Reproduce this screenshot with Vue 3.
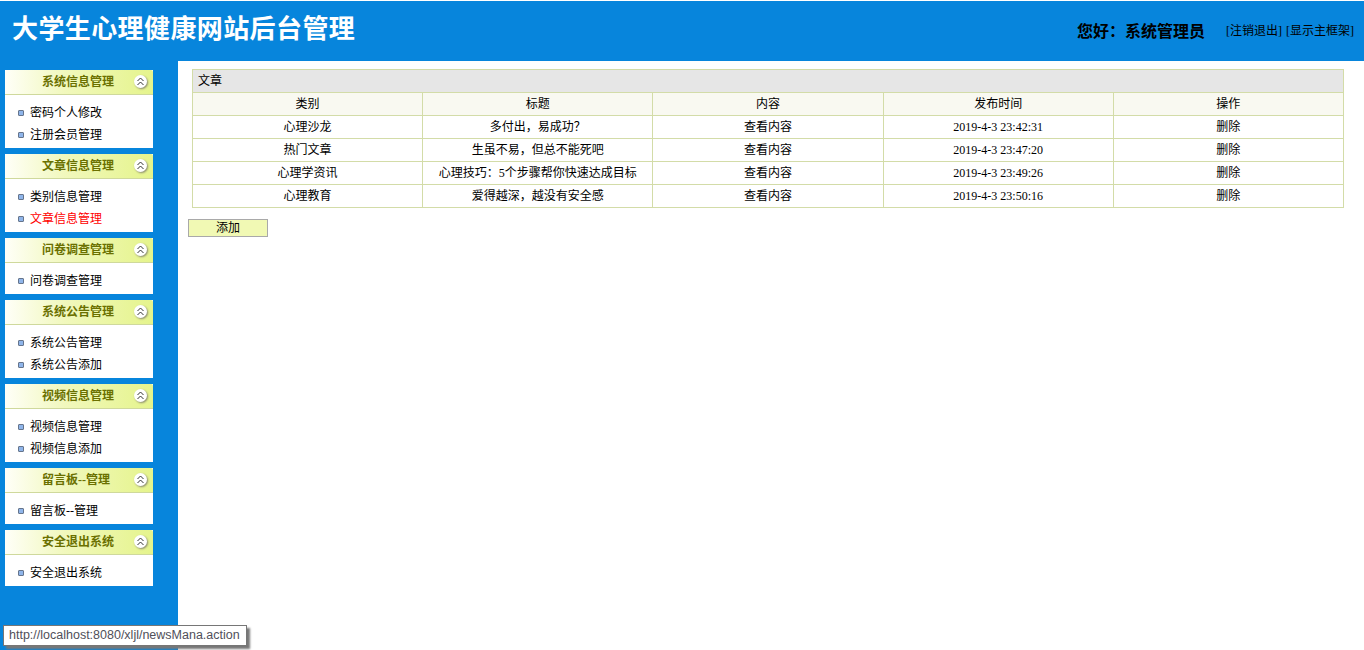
<script setup>
import { ref } from "vue"

const menus = ref([
  { title: "系统信息管理", items: [{ text: "密码个人修改" }, { text: "注册会员管理" }] },
  { title: "文章信息管理", items: [{ text: "类别信息管理" }, { text: "文章信息管理", active: true }] },
  { title: "问卷调查管理", items: [{ text: "问卷调查管理" }] },
  { title: "系统公告管理", items: [{ text: "系统公告管理" }, { text: "系统公告添加" }] },
  { title: "视频信息管理", items: [{ text: "视频信息管理" }, { text: "视频信息添加" }] },
  { title: "留言板--管理", items: [{ text: "留言板--管理" }] },
  { title: "安全退出系统", items: [{ text: "安全退出系统" }] },
])

const articles = ref([
  { type: "心理沙龙", title: "多付出，易成功？", time: "2019-4-3 23:42:31" },
  { type: "热门文章", title: "生虽不易，但总不能死吧", time: "2019-4-3 23:47:20" },
  { type: "心理学资讯", title: "心理技巧：5个步骤帮你快速达成目标", time: "2019-4-3 23:49:26" },
  { type: "心理教育", title: "爱得越深，越没有安全感", time: "2019-4-3 23:50:16" },
])
</script>

<template>
  <div class="page">
    <!-- Header -->
    <header class="top">
      <h1 class="site-title">大学生心理健康网站后台管理</h1>
      <div class="top-right">
        <span class="hello">您好：系统管理员</span>
        <span class="top-links">
          <a class="top-link">[注销退出]</a>
          <a class="top-link">[显示主框架]</a>
        </span>
      </div>
    </header>

    <div class="main">
      <!-- Sidebar -->
      <aside class="side">
        <section v-for="menu in menus" :key="menu.title" class="panel">
          <div class="panel-head">
            <span class="panel-title">{{ menu.title }}</span>
            <span class="collapse">
              <svg width="9" height="9" viewBox="0 0 9 9" fill="none" stroke="#333" stroke-width="1">
                <path d="M1.5 4 4.5 1 7.5 4" />
                <path d="M1.5 8 4.5 5 7.5 8" />
              </svg>
            </span>
          </div>
          <ul class="panel-body">
            <li
              v-for="item in menu.items"
              :key="item.text"
              class="menu-item"
              :class="{ active: item.active }"
            >
              <i class="dot"></i>{{ item.text }}
            </li>
          </ul>
        </section>
      </aside>

      <!-- Content -->
      <main class="content">
        <table class="grid">
          <colgroup>
            <col v-for="n in 5" :key="n" class="grid-col" />
          </colgroup>
          <thead>
            <tr><th colspan="5" class="grid-caption">文章</th></tr>
            <tr class="grid-head">
              <td>类别</td>
              <td>标题</td>
              <td>内容</td>
              <td>发布时间</td>
              <td>操作</td>
            </tr>
          </thead>
          <tbody>
            <tr v-for="row in articles" :key="row.time">
              <td>{{ row.type }}</td>
              <td>{{ row.title }}</td>
              <td>查看内容</td>
              <td class="time">{{ row.time }}</td>
              <td>删除</td>
            </tr>
          </tbody>
        </table>
        <button class="add-btn" type="button">添加</button>
      </main>
    </div>

    <!-- Browser status tooltip -->
    <div class="status-tip">http://localhost:8080/xljl/newsMana.action</div>
  </div>
</template>

<style>
html, body {
  margin: 0;
  overflow: hidden;
  background: #fff;
}
</style>

<style scoped>
.page {
  position: relative;
  height: 650px;
  display: flex;
  flex-direction: column;
  overflow: hidden;
  padding-top: 1px;
  box-sizing: border-box;
  font-family: "Liberation Serif", "Noto Sans CJK SC", serif;
  font-size: 12px;
  color: #000;
}

.top {
  height: 60px;
  flex: none;
  background: #0785dc;
  display: flex;
  align-items: center;
  justify-content: space-between;
  padding: 0 10px 0 12px;
}

.site-title {
  margin: 0 0 2px;
  font-size: 26px;
  font-weight: 700;
  letter-spacing: 0.4px;
  color: #fff;
  line-height: 30px;
}

.top-right {
  display: flex;
  align-items: center;
  gap: 21px;
  margin-bottom: 3px;
}

.hello {
  font-size: 16px;
  font-weight: 700;
}

.top-links {
  display: flex;
  gap: 4px;
  font-size: 14px;
}

.top-link {
  font-size: 12px;
}

.main {
  flex: 1;
  display: flex;
  min-height: 0;
}

.side {
  width: 178px;
  flex: none;
  background: #0785dc;
  box-sizing: border-box;
  padding: 9px 25px 0 5px;
  display: flex;
  flex-direction: column;
  gap: 6px;
}

.panel {
  background: #fff;
}

.panel-head {
  height: 25px;
  box-sizing: border-box;
  border-bottom: 1px solid #cfd99c;
  background: linear-gradient(90deg, #fffff8 0%, #f1f8bd 40%, #e5f48c 100%);
  border-radius: 2px 2px 0 0;
  display: flex;
  align-items: center;
  position: relative;
}

.panel-title {
  margin-left: 37px;
  font-weight: 700;
  color: #6a7000;
  line-height: 24px;
}

.collapse {
  position: absolute;
  right: 6px;
  top: 5px;
  width: 13px;
  height: 13px;
  border-radius: 50%;
  background: #fff;
  box-shadow: 1px 1px 2px #8a8a70;
  display: flex;
  align-items: center;
  justify-content: center;
}

.panel-body {
  list-style: none;
  margin: 0;
  padding: 7px 0 2px;
}

.menu-item {
  height: 22px;
  line-height: 22px;
  display: flex;
  align-items: center;
  padding-left: 13px;
}

.menu-item.active {
  color: #f00;
}

.dot {
  width: 4px;
  height: 4px;
  margin-right: 6px;
  border: 1px solid #66758c;
  border-radius: 1px;
  background: #8fb5ea;
}

.content {
  flex: 1;
  min-width: 0;
  background: #fff;
  padding: 8px 20px 0 10px;
}

.grid {
  width: 1152px;
  margin-left: 4px;
  border-collapse: collapse;
  table-layout: fixed;
}

.grid th,
.grid td {
  height: 22px;
  padding: 0;
  border: 1px solid #d3dca8;
  text-align: center;
  font-weight: 400;
  line-height: 16px;
}

.grid .grid-caption {
  background: #e6e6e6;
  text-align: left;
  padding-left: 5px;
}

.grid-head td {
  background: #f9f9f1;
}

.time {
  font-size: 12px;
}

.add-btn {
  display: block;
  width: 80px;
  height: 18px;
  margin-top: 11px;
  padding: 0;
  border: 1px solid #a9a9a9;
  background: #f1f9b4;
  font: inherit;
  line-height: 14px;
  color: #000;
}

.status-tip {
  position: absolute;
  left: 3px;
  top: 625px;
  height: 19px;
  padding: 0 6px 0 5px;
  border: 1px solid #767676;
  background: #fff;
  box-shadow: 3px 3px 2px #777;
  font-family: "Liberation Sans", sans-serif;
  font-size: 12.5px;
  line-height: 19px;
  color: #50505a;
  white-space: nowrap;
}
</style>
